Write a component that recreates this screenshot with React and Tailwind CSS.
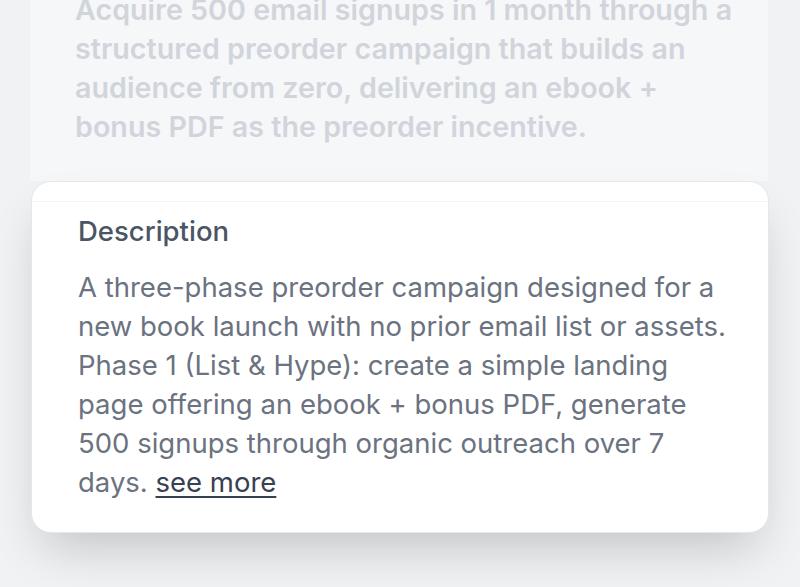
export default function App() {
  return (
    <div
      className="w-[800px] h-[587px] overflow-hidden bg-[#f1f2f4] px-[30px]"
      style={{ fontFamily: "Inter, 'Noto Sans', sans-serif" }}
    >
      <div className="w-[738px] bg-[#f6f7f9] pl-[45px] pr-[32px] pb-[35px] mt-[-10px]">
        <p className="text-[28.7px] leading-[39px] font-semibold text-[#d1d5db]">
          Acquire 500 email signups in 1 month through a structured preorder campaign that builds an audience from zero, delivering an ebook + bonus PDF as the preorder incentive.
        </p>
      </div>
      <div className="ml-[1px] w-[738px] bg-white rounded-[20px] border border-[#e5e7eb] shadow-[0_25px_50px_-12px_rgba(0,0,0,0.2)] overflow-hidden">
        <div className="h-[20px] border-b border-[#f3f4f6]"></div>
        <div className="pl-[46px] pr-[40px] pt-[10px] pb-[30px]">
          <h3 className="text-[27.5px] leading-[39px] font-medium text-[#4b5563]">Description</h3>
          <p className="mt-[17px] text-[27.5px] leading-[39px] text-[#6b7280]">
            A three-phase preorder campaign designed for a new book launch with no prior email list or assets. Phase 1 (List &amp; Hype): create a simple landing page offering an ebook + bonus PDF, generate 500 signups through organic outreach over 7 days.{" "}
            <span className="text-[#374151] underline underline-offset-[4px]">see more</span>
          </p>
        </div>
      </div>
    </div>
  );
}
